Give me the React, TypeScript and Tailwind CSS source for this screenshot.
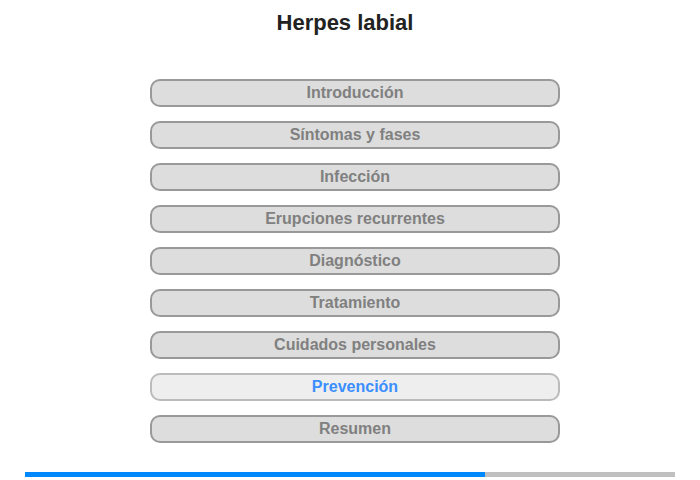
const sections = [
  "Introducción",
  "Síntomas y fases",
  "Infección",
  "Erupciones recurrentes",
  "Diagnóstico",
  "Tratamiento",
  "Cuidados personales",
  "Prevención",
  "Resumen",
];

const current = 7;

export default function App() {
  return (
    <div className="w-[700px] h-[480px] bg-white font-['Liberation_Sans',Arial,sans-serif] flex flex-col items-center">
      <h1 className="mt-[9px] mr-[10px] text-[22px] leading-[28px] font-bold text-[#222]">
        Herpes labial
      </h1>
      <div className="mt-[42px] ml-[10px] flex flex-col gap-[14px]">
        {sections.map((s, i) => (
          <div
            key={s}
            className={
              i === current
                ? "w-[410px] h-[28px] rounded-[10px] border-2 border-[#bbb] bg-[#eee] text-[#3b8eff] flex items-center justify-center text-[16px] font-bold"
                : "w-[410px] h-[28px] rounded-[10px] border-2 border-[#999] bg-[#ddd] text-[#808080] flex items-center justify-center text-[16px] font-bold"
            }
          >
            {s}
          </div>
        ))}
      </div>
      <div className="mt-[29px] w-[650px] h-[5px] bg-[#c0c0c0] flex">
        <div className="h-full w-[460px] bg-[#0088ff]" />
      </div>
    </div>
  );
}
